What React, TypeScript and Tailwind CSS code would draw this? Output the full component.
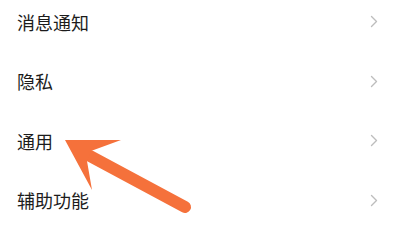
import React from 'react';

const items = ['消息通知', '隐私', '通用', '辅助功能'];

const Chevron = () => (
  <svg width="8" height="13" viewBox="0 0 8 13" fill="none">
    <path d="M1.5 1.5 L6.5 6.5 L1.5 11.5" stroke="#bdbdbd" strokeWidth="1.4" strokeLinecap="round" strokeLinejoin="round" />
  </svg>
);

export default function App() {
  return (
    <div className="relative w-[400px] h-[245px] bg-white overflow-hidden font-['Noto_Sans_CJK_SC','Noto_Sans',sans-serif]">
      <div className="flex flex-col -mt-[8px]">
        {items.map((label) => (
          <div key={label} className="flex items-center justify-between h-[59.5px] pl-[17px] pr-[22px]">
            <span className="text-[18px] leading-none text-[#1c1c1c]">{label}</span>
            <Chevron />
          </div>
        ))}
      </div>
      {/* orange pointer arrow */}
      <svg className="absolute left-0 top-0" width="400" height="245" viewBox="0 0 400 245">
        <line x1="90" y1="156" x2="185" y2="207" stroke="#f5713b" strokeWidth="12" strokeLinecap="round" />
        <polygon points="65,140 121,140 91,151 87,161 92,190" fill="#f5713b" />
      </svg>
    </div>
  );
}
